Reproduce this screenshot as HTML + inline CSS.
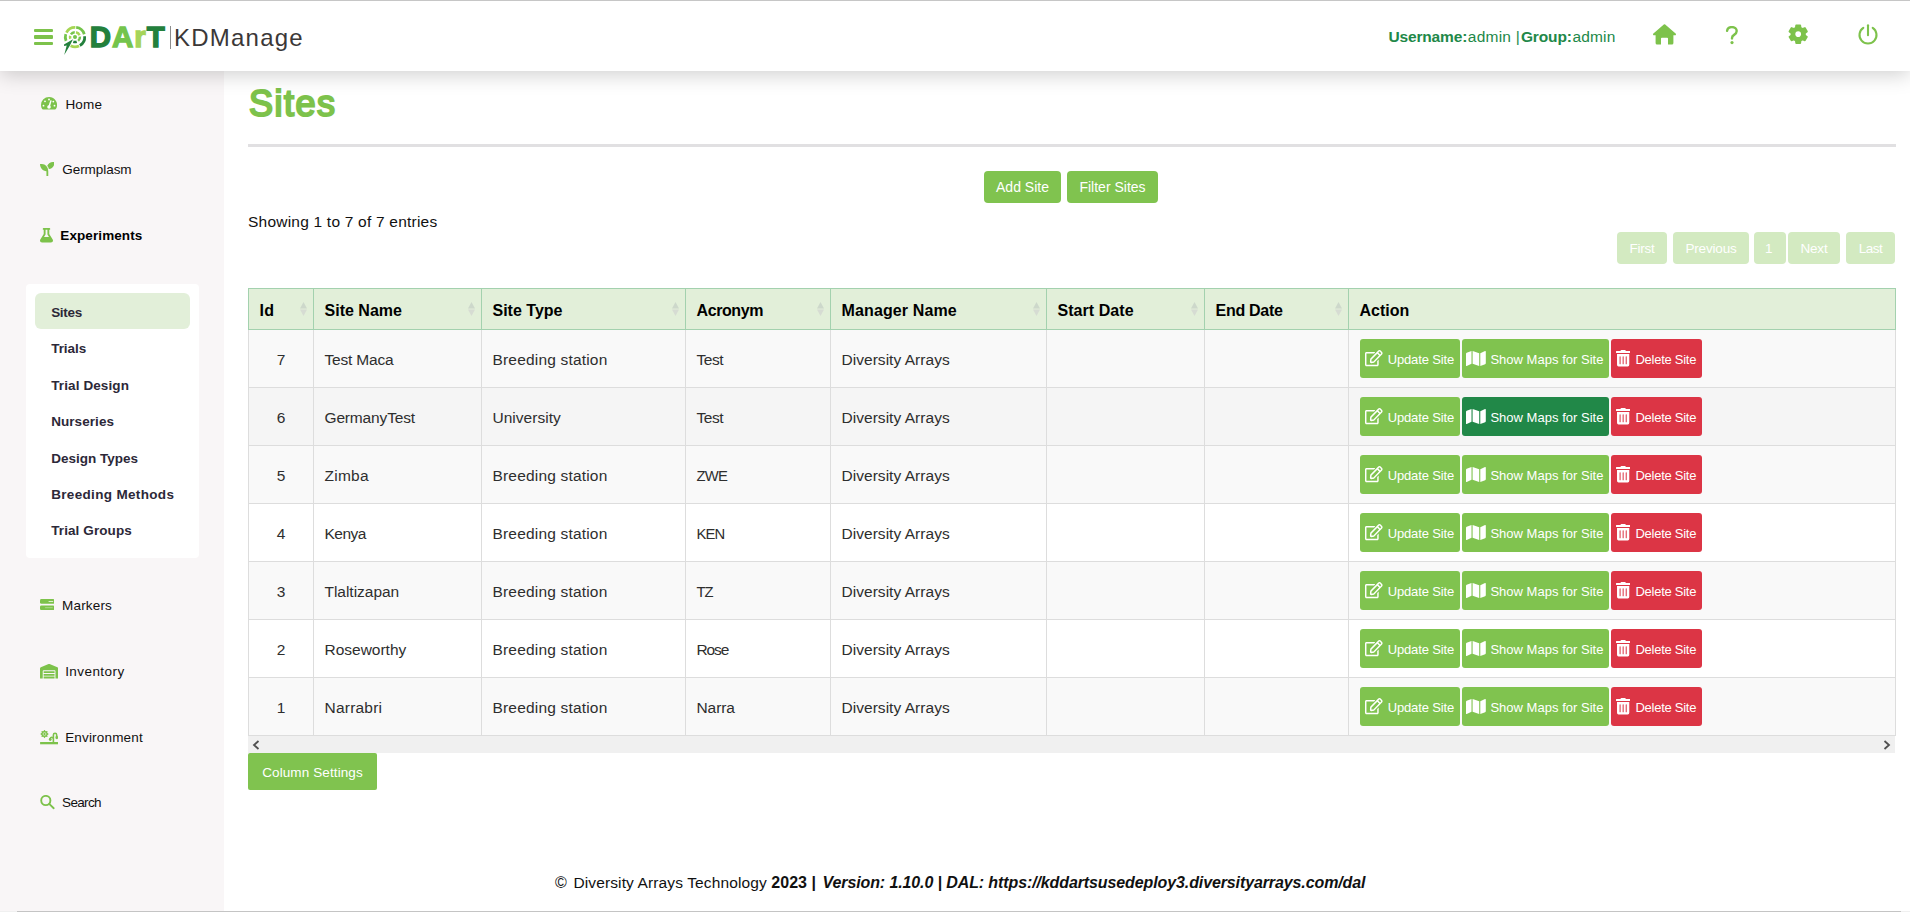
<!DOCTYPE html>
<html lang="en">
<head>
<meta charset="utf-8">
<title>KDManage - Sites</title>
<style>
*{box-sizing:border-box;margin:0;padding:0}
html,body{width:1910px;height:912px;overflow:hidden;background:#fff}
body{font-family:"Liberation Sans",sans-serif;color:#212529;position:relative}
svg{display:block}
#hdr{position:absolute;left:0;top:0;width:1910px;height:71px;border-top:1px solid #c6c6c6;background:#fff;box-shadow:0 3px 20px rgba(0,0,0,.2);z-index:5}
#burger{position:absolute;left:34px;top:28px;width:18.5px;height:16px}
#burger i{position:absolute;left:0;width:18.5px;height:3.2px;background:#7dc24b;border-radius:1px}
#logo{position:absolute;left:60px;top:21px}
#dart{position:absolute;left:89.700px;top:18px;font-size:29.500px;font-weight:bold;line-height:36px;letter-spacing:.95px;-webkit-text-stroke:1.300px currentColor;white-space:nowrap}
#dart .d{color:#23803c}#dart .a{color:#74c44c}#dart .r{color:#a6d45a}#dart .t{color:#23803c}
#sep{position:absolute;left:170px;top:25px;width:1px;height:23px;background:#8d8d8d}
#kdm{position:absolute;left:174px;top:22px;font-size:24px;line-height:30px;color:#3b3838;white-space:nowrap}
#user{position:absolute;left:1388.500px;top:26px;font-size:15.500px;line-height:20px;color:#218848;white-space:nowrap}
#user b{font-weight:bold}
#user span,#user b{position:absolute;top:0}
.hic{position:absolute}
#side{position:absolute;left:0;top:70px;width:224px;height:842px;background:#f9f6f7}
.mi{position:absolute;left:0;width:224px;height:20px;font-size:13.500px;line-height:21px;color:#111;white-space:nowrap}
.mi svg{position:absolute}
.mi span{position:absolute;top:0}
#sub{position:absolute;left:26px;top:214px;width:173px;height:274px;background:#fff;border-radius:4px}
#sub a{position:absolute;left:9px;width:155px;height:36px;line-height:39px;padding-left:16.200px;font-size:13.500px;font-weight:bold;color:#2c2838;border-radius:6px;text-decoration:none;white-space:nowrap}
#sub a.on{background:#e2efd9}
#main{position:absolute;left:224px;top:70px;width:1686px;height:842px;background:#fff}
h1{position:absolute;left:25px;top:10px;font-size:36px;line-height:48px;font-weight:normal;-webkit-text-stroke:2.100px #7dc24b;color:#7dc24b;white-space:nowrap;letter-spacing:1.500px}
#hr{position:absolute;left:24px;top:74px;width:1648px;height:3px;background:#e1e0e2}
.btn{position:absolute;height:32px;line-height:32px;border-radius:4px;background:#80c34f;color:#fff;font-size:14px;text-align:center;white-space:nowrap}
#info{position:absolute;left:24px;top:141px;font-size:15.500px;line-height:22px;color:#111;white-space:nowrap}
.pg{position:absolute;top:162px;height:32px;line-height:34px;border-radius:4px;background:#d3eac1;color:#fff;font-size:13.500px;text-align:center;white-space:nowrap}
#tbl{position:absolute;left:24px;top:218px;width:1647px;border-collapse:collapse;table-layout:fixed;font-size:15.500px}
#tbl th{height:41px;background:#e2efd9;border:1px solid #a3d1ae;text-align:left;padding:3px 0 0 10.500px;font-size:16px;font-weight:bold;color:#000;position:relative;white-space:nowrap}
#tbl td{height:58px;border:1px solid #ddd;padding:2px 0 0 10.500px;color:#2e2e2e;white-space:nowrap;vertical-align:middle;background:#fff}
#tbl tr:nth-child(odd) td{background:#f9f9f9}
#tbl tr.hov td{background:#f5f5f5}
#tbl td.c{text-align:center;padding:2px 0 0 0}
#tbl td.act{padding-left:11px}
.srt{position:absolute;right:6px;top:13px;width:7px;height:14px}
.aw{position:relative;top:-1px;height:39px;width:345px}
.ab{position:absolute;top:0;height:39px;line-height:42px;border-radius:3px;color:#fff;font-size:13px}
.ab svg{position:absolute}
.ab em{position:absolute;top:0;font-style:normal;white-space:nowrap}
.ab.u{left:0;width:100px;background:#80c34f}
.ab.m{left:102.200px;width:146.700px;background:#80c34f}
.ab.m.dk{background:#218848}
.ab.d{left:251px;width:91px;background:#dc3545}
.ic-e{left:5px;top:11.400px}.ab.u em{left:27.700px}
.ic-m{left:3.800px;top:11.700px}.ab.m em{left:28.200px}
.ic-t{left:5px;top:11.400px}.ab.d em{left:24.500px}
#scr{position:absolute;left:24px;top:666px;width:1647px;height:17px;background:#f0f0f0}
#scr svg{position:absolute;top:4px}
#cols{position:absolute;left:24px;top:683px;width:129px;height:37px;line-height:40px;background:#80c34f;color:#fff;font-size:13.500px;text-align:center;border-radius:2px;white-space:nowrap}
#foot{position:absolute;left:0;top:801.500px;width:1686px;height:22px;font-size:16px;line-height:22px;color:#111;white-space:nowrap}
#foot span,#foot b{position:absolute;top:0}
#botline{position:absolute;left:0;top:911px;width:1910px;height:1px;background:#f0f0f0;z-index:6}
#botline i{position:absolute;left:17px;top:0;width:1884px;height:1px;background:#c4c4c4}
</style>
</head>
<body>
<div id="hdr">
  <div id="burger"><i style="top:0"></i><i style="top:6.400px"></i><i style="top:12.900px"></i></div>
  <svg id="logo" width="30" height="36" viewBox="0 0 30 36"><g fill="none"><path d="M6.44 10.55A9.70 9.70 0 0 1 15.34 5.41" stroke="#a6d653" stroke-width="2.75"/><path d="M16.18 5.47A9.70 9.70 0 0 1 24.28 12.26" stroke="#74c44c" stroke-width="2.75"/><path d="M24.66 14.25A9.70 9.70 0 0 1 19.85 23.50" stroke="#23803c" stroke-width="2.75"/><path d="M19.10 23.89A9.70 9.70 0 0 1 10.60 23.74" stroke="#a6d653" stroke-width="2.75"/><path d="M6.07 18.89A9.70 9.70 0 0 1 5.77 12.10" stroke="#74c44c" stroke-width="2.75"/><path d="M10.90 12.33A4.95 4.95 0 0 1 14.74 10.16" stroke="#74c44c" stroke-width="2.50"/><path d="M16.03 10.26A4.95 4.95 0 0 1 19.56 13.17" stroke="#a6d653" stroke-width="2.50"/><path d="M19.92 14.58A4.95 4.95 0 0 1 18.18 18.89" stroke="#74c44c" stroke-width="2.50"/><path d="M16.69 19.75A4.95 4.95 0 0 1 13.31 19.75" stroke="#23803c" stroke-width="2.50"/><path d="M10.35 16.79A4.95 4.95 0 0 1 10.22 13.82" stroke="#a6d653" stroke-width="2.50"/></g><circle cx="15.0" cy="15.1" r="2" fill="#74c44c"/><path d="M13 17.200L4 22.500L4.100 23.900L6.700 23.500L4.200 32.900L9.600 24z" fill="#23803c"/></svg>
  <div id="dart"><span class="d">D</span><span class="a">A</span><span class="r">r</span><span class="t">T</span></div>
  <div id="sep"></div>
  <div id="kdm" style="letter-spacing:1.22px">KDManage</div>
  <svg class="hic" style="left:1652.800px;top:23.300px" width="23" height="20.500" viewBox="0 0 23 20.500"><path fill="#7dc24b" d="M11.500 0.200a1 1 0 0 1 .7.250L22.600 9.600a.95.95 0 0 1-.6 1.700H20.400V19a1.500 1.500 0 0 1-1.500 1.500H15V14.500a.8.800 0 0 0-.8-.8H8.800a.8.800 0 0 0-.8.800V20.500H4.100A1.500 1.500 0 0 1 2.600 19V11.300H1a.95.95 0 0 1-.6-1.700L10.800.450a1 1 0 0 1 .7-.250z"/></svg><svg class="hic" style="left:1724.800px;top:25.200px" width="14" height="18.500" viewBox="0 0 14 18.500"><path fill="none" stroke="#7dc24b" stroke-width="2.400" stroke-linecap="round" stroke-linejoin="round" d="M2.100 4.800C2.400 2.600 4.300 1.100 6.900 1.100c2.800 0 4.800 1.600 4.800 4 0 1.900-1.100 2.900-2.600 3.800C7.600 9.800 7 10.500 7 12v.4"/><circle cx="7" cy="16.600" r="1.600" fill="#7dc24b"/></svg><svg class="hic" style="left:1787.900px;top:23.300px" width="20.400" height="20.400" viewBox="0 0 20.400 20.400"><path fill="#7dc24b" stroke="#7dc24b" stroke-width="1.600" stroke-linejoin="round" fill-rule="evenodd" d="M7.73 3.76L8.13 1.24L12.27 1.24L12.67 3.76L14.54 4.84L16.93 3.93L19.00 7.51L17.02 9.12L17.02 11.28L19.00 12.89L16.93 16.47L14.54 15.56L12.67 16.64L12.27 19.16L8.13 19.16L7.73 16.64L5.86 15.56L3.47 16.47L1.40 12.89L3.38 11.28L3.38 9.12L1.40 7.51L3.47 3.93L5.86 4.84zM6.50 10.20a3.70 3.70 0 1 0 7.40 0a3.70 3.70 0 1 0 -7.40 0z"/></svg><svg class="hic" style="left:1857px;top:23.400px" width="22" height="22" viewBox="0 0 22 22"><g fill="none" stroke="#7dc24b" stroke-width="2.100" stroke-linecap="round"><path d="M11 1.200V11.200"/><path d="M6.300 3.900A8.500 8.500 0 1 0 15.700 3.900"/></g></svg>
  <div id="user"><b style="left:0.0px;letter-spacing:-0.166px">Username:</b><span style="left:79.3px;letter-spacing:0.24px">admin |</span><b style="left:132.4px;letter-spacing:-0.131px">Group:</b><span style="left:184.0px;letter-spacing:0.145px">admin</span></div>
</div>
<div id="side">
  <div class="mi" style="top:24px"><svg style="left:40.500px;top:2.800px" width="16" height="13" viewBox="0 0 16 13"><path fill="#7dc24b" d="M8 0A8 8 0 0 0 0 8c0 1.500.4 2.900 1.100 4.100.2.300.5.500.9.500h12c.4 0 .7-.2.9-.5A8 8 0 0 0 8 0z"/><g fill="#fff"><circle cx="8" cy="2.500" r=".9"/><circle cx="4" cy="4.300" r=".9"/><circle cx="2.500" cy="8.700" r=".9"/><circle cx="13.500" cy="8.700" r=".9"/><circle cx="12.300" cy="4.600" r=".9"/><circle cx="8" cy="10" r="1.800"/><path d="M7.200 9.800L9.400 3.200l1.300.4L8.700 10.200z"/></g></svg><span style="left:65.4px;letter-spacing:0.19px">Home</span></div>
  <div class="mi" style="top:89px"><svg style="left:39.500px;top:2.700px" width="14.700" height="14.300" viewBox="0 32 512 448" preserveAspectRatio="none"><path fill="#7dc24b" d="M64 96H0c0 123.700 100.300 224 224 224v144c0 8.800 7.200 16 16 16h32c8.800 0 16-7.200 16-16V320C288 196.300 187.700 96 64 96zm384-64c-84.200 0-157.400 46.500-195.700 115.200 27.700 30.200 48.200 66.900 59 107.600C424 243.100 512 147.900 512 32h-64z"/></svg><span style="left:62.3px;letter-spacing:-0.062px">Germplasm</span></div>
  <div class="mi" style="top:155px"><svg style="left:39.700px;top:3px" width="13" height="14.500" viewBox="0 0 448 512" preserveAspectRatio="none"><path fill="#7dc24b" d="M437.200 403.500L320 215V64h8c13.300 0 24-10.700 24-24V24c0-13.300-10.700-24-24-24H120c-13.300 0-24 10.700-24 24v16c0 13.300 10.700 24 24 24h8v151L10.800 403.500C-18.500 450.600 15.300 512 70.900 512h306.200c55.700 0 89.400-61.500 60.100-108.500zM137.900 320l48.200-77.600c3.700-5.200 5.800-11.600 5.800-18.400V64h64v160c0 6.900 2.200 13.200 5.900 18.400l48.200 77.600h-172.100z"/></svg><span style="left:60.3px;font-weight:bold;color:#000;letter-spacing:0.094px">Experiments</span></div>
  <div class="mi" style="top:525px"><svg style="left:39.700px;top:4px" width="14.400" height="11.100" viewBox="0 0 28.800 22.200"><rect x="0" y="0" width="28.800" height="9.600" rx="2.800" fill="#7dc24b"/><rect x="0" y="12.800" width="28.800" height="9.400" rx="2.800" fill="#7dc24b"/><path d="M18 5h7.600" stroke="#fff" stroke-width="1.500" stroke-linecap="round"/><path d="M11 17.400h13.600" stroke="#c3e4ac" stroke-width="1.300" stroke-linecap="round"/></svg><span style="left:62.1px;letter-spacing:0.17px">Markers</span></div>
  <div class="mi" style="top:591px"><svg style="left:39.700px;top:3.400px" width="18.200" height="14.400" viewBox="0 0 640 512" preserveAspectRatio="none"><path fill="#7dc24b" d="M504 352H136.400c-4.400 0-8 3.600-8 8l-.1 48c0 4.400 3.600 8 8 8H504c4.400 0 8-3.600 8-8v-48c0-4.400-3.600-8-8-8zm0 96H136.100c-4.400 0-8 3.600-8 8l-.1 48c0 4.400 3.600 8 8 8h368c4.400 0 8-3.600 8-8v-48c0-4.400-3.600-8-8-8zm0-192H136.600c-4.400 0-8 3.600-8 8l-.1 48c0 4.400 3.600 8 8 8H504c4.400 0 8-3.600 8-8v-48c0-4.400-3.600-8-8-8zm106.500-139L338.400 3.700a48.150 48.150 0 0 0-36.900 0L29.500 117C11.700 124.500 0 141.900 0 161.300V504c0 4.400 3.600 8 8 8h80c4.400 0 8-3.600 8-8V256c0-17.600 14.600-32 32.600-32h382.800c18 0 32.600 14.400 32.600 32v248c0 4.400 3.600 8 8 8h80c4.400 0 8-3.600 8-8V161.300c0-19.400-11.700-36.800-29.500-44.300z"/></svg><span style="left:65.2px;letter-spacing:0.43px">Inventory</span></div>
  <div class="mi" style="top:657px"><svg style="left:39.700px;top:3px" width="18.200" height="14.500" viewBox="0 0 36.400 29"><path d="M9.00 -0.60L11.26 2.55L15.08 1.92L14.45 5.74L17.60 8.00L14.45 10.26L15.08 14.08L11.26 13.45L9.00 16.60L6.74 13.45L2.92 14.08L3.55 10.26L0.40 8.00L3.55 5.74L2.92 1.92L6.74 2.55z" fill="#7dc24b"/><circle cx="9" cy="8" r="2.900" fill="none" stroke="#e9f4df" stroke-width="1.300"/><g fill="none" stroke="#7dc24b"><path d="M0.200 26.300h36" stroke-width="4.600"/><path d="M26.800 25V9.800a3.300 3.300 0 0 1 6.600 0v3.500" stroke-width="3.200"/><path d="M26.800 17a3.300 3.300 0 0 0-6.400 0v1.500" stroke-width="3"/></g><ellipse cx="33.500" cy="14.800" rx="2.700" ry="3.500" fill="#7dc24b"/><ellipse cx="20.500" cy="18.600" rx="2.700" ry="3.300" fill="#7dc24b"/></svg><span style="left:65.2px;letter-spacing:0.167px">Environment</span></div>
  <div class="mi" style="top:722px"><svg style="left:39.700px;top:3px" width="16" height="16" viewBox="0 0 16 16"><g fill="none" stroke="#7dc24b" stroke-width="1.900" stroke-linecap="round"><circle cx="5.800" cy="5.500" r="4.600"/><path d="M9.200 8.900L13.700 13.200"/></g></svg><span style="left:62.1px;letter-spacing:-0.679px">Search</span></div>
  <div id="sub">
    <a class="on" style="top:9px;letter-spacing:-0.32px">Sites</a>
    <a style="top:45px;letter-spacing:-0.036px">Trials</a>
    <a style="top:82px;letter-spacing:0.114px">Trial Design</a>
    <a style="top:118px;letter-spacing:0.061px">Nurseries</a>
    <a style="top:155px;letter-spacing:0.007px">Design Types</a>
    <a style="top:191px;letter-spacing:0.332px">Breeding Methods</a>
    <a style="top:227px;letter-spacing:0.097px">Trial Groups</a>
  </div>
</div>
<div id="main">
  <h1>Sites</h1>
  <div id="hr"></div>
  <div class="btn" style="left:760px;top:101px;width:77px">Add Site</div>
  <div class="btn" style="left:843px;top:101px;width:91px">Filter Sites</div>
  <div id="info" style="letter-spacing:0.218px">Showing 1 to 7 of 7 entries</div>
  <div class="pg" style="left:1393px;width:50px;letter-spacing:-0.263px">First</div>
  <div class="pg" style="left:1449px;width:76px;letter-spacing:-0.178px">Previous</div>
  <div class="pg" style="left:1530px;width:32px;padding-right:2.500px">1</div>
  <div class="pg" style="left:1564px;width:52px;letter-spacing:-0.189px">Next</div>
  <div class="pg" style="left:1622px;width:49px;letter-spacing:-0.477px">Last</div>
<table id="tbl"><colgroup><col style="width:65px"><col style="width:168px"><col style="width:204px"><col style="width:145px"><col style="width:216px"><col style="width:158px"><col style="width:144px"><col style="width:547px"></colgroup>
<thead><tr><th><span style="letter-spacing:0.266px">Id</span><svg class="srt" viewBox="0 0 7 14"><path d="M3.500 0L7 6.400H0z" fill="#cdd8cb"/><path d="M3.500 14L7 7.600H0z" fill="#d6dcd3"/></svg></th><th><span style="letter-spacing:0.01px">Site Name</span><svg class="srt" viewBox="0 0 7 14"><path d="M3.500 0L7 6.400H0z" fill="#cdd8cb"/><path d="M3.500 14L7 7.600H0z" fill="#d6dcd3"/></svg></th><th><span style="letter-spacing:0.0px">Site Type</span><svg class="srt" viewBox="0 0 7 14"><path d="M3.500 0L7 6.400H0z" fill="#cdd8cb"/><path d="M3.500 14L7 7.600H0z" fill="#d6dcd3"/></svg></th><th><span style="letter-spacing:-0.401px">Acronym</span><svg class="srt" viewBox="0 0 7 14"><path d="M3.500 0L7 6.400H0z" fill="#cdd8cb"/><path d="M3.500 14L7 7.600H0z" fill="#d6dcd3"/></svg></th><th><span style="letter-spacing:0.127px">Manager Name</span><svg class="srt" viewBox="0 0 7 14"><path d="M3.500 0L7 6.400H0z" fill="#cdd8cb"/><path d="M3.500 14L7 7.600H0z" fill="#d6dcd3"/></svg></th><th><span style="letter-spacing:0.053px">Start Date</span><svg class="srt" viewBox="0 0 7 14"><path d="M3.500 0L7 6.400H0z" fill="#cdd8cb"/><path d="M3.500 14L7 7.600H0z" fill="#d6dcd3"/></svg></th><th><span style="letter-spacing:-0.284px">End Date</span><svg class="srt" viewBox="0 0 7 14"><path d="M3.500 0L7 6.400H0z" fill="#cdd8cb"/><path d="M3.500 14L7 7.600H0z" fill="#d6dcd3"/></svg></th><th><span style="letter-spacing:-0.003px">Action</span></th></tr></thead><tbody>
<tr><td class="c">7</td><td><span style="letter-spacing:-0.182px">Test Maca</span></td><td><span style="letter-spacing:0.182px">Breeding station</span></td><td><span style="letter-spacing:-0.479px">Test</span></td><td><span style="letter-spacing:0.037px">Diversity Arrays</span></td><td></td><td></td><td class="act"><div class="aw"><span class="ab u"><svg class="ic-e" viewBox="0 0 576 512" width="17.600" height="16.200" preserveAspectRatio="none"><path fill="#fff" d="M402.300 344.900l32-32c5-5 13.700-1.500 13.700 5.700V464c0 26.500-21.500 48-48 48H48c-26.500 0-48-21.500-48-48V112c0-26.500 21.500-48 48-48h273.500c7.100 0 10.700 8.600 5.700 13.700l-32 32c-1.500 1.500-3.500 2.300-5.700 2.300H48v352h352V350.500c0-2.100.8-4.100 2.300-5.600zm156.600-201.800L296.300 405.700l-90.400 10c-26.200 2.900-48.500-19.200-45.600-45.600l10-90.400L432.900 17.100c22.900-22.900 59.900-22.900 82.700 0l43.200 43.200c22.900 22.900 22.900 60 .1 82.800zM460.100 174L402 115.900 216.200 301.800l-7.300 65.300 65.300-7.300L460.100 174zm64.800-79.700l-43.200-43.200c-4.100-4.100-10.800-4.100-14.800 0L436 82l58.100 58.100 30.900-30.900c4-4.200 4-10.800-.1-14.900z"/></svg><em style="letter-spacing:-0.145px">Update Site</em></span><span class="ab m"><svg class="ic-m" viewBox="0 32 576 448" width="19.800" height="15" preserveAspectRatio="none"><path fill="#fff" d="M0 117.660v346.320c0 11.320 11.430 19.060 21.940 14.860L160 416V32L20.120 87.950A32.006 32.006 0 0 0 0 117.660zM192 416l192 64V96L192 32v384zM554.060 33.160L416 96v384l139.880-55.950A31.996 31.996 0 0 0 576 394.340V48.020c0-11.320-11.430-19.060-21.940-14.860z"/></svg><em style="letter-spacing:0.022px">Show Maps for Site</em></span><span class="ab d"><svg class="ic-t" viewBox="0 0 448 512" width="14.300" height="16.400" preserveAspectRatio="none"><path fill="#fff" d="M32 464a48 48 0 0 0 48 48h288a48 48 0 0 0 48-48V128H32zm272-256a16 16 0 0 1 32 0v224a16 16 0 0 1-32 0zm-96 0a16 16 0 0 1 32 0v224a16 16 0 0 1-32 0zm-96 0a16 16 0 0 1 32 0v224a16 16 0 0 1-32 0zM432 32H312l-9.400-18.700A24 24 0 0 0 281.100 0H166.800a23.720 23.720 0 0 0-21.400 13.300L136 32H16A16 16 0 0 0 0 48v32a16 16 0 0 0 16 16h416a16 16 0 0 0 16-16V48a16 16 0 0 0-16-16z"/></svg><em style="letter-spacing:-0.271px">Delete Site</em></span></div></td></tr>
<tr class="hov"><td class="c">6</td><td><span style="letter-spacing:-0.159px">GermanyTest</span></td><td><span style="letter-spacing:0.019px">University</span></td><td><span style="letter-spacing:-0.479px">Test</span></td><td><span style="letter-spacing:0.037px">Diversity Arrays</span></td><td></td><td></td><td class="act"><div class="aw"><span class="ab u"><svg class="ic-e" viewBox="0 0 576 512" width="17.600" height="16.200" preserveAspectRatio="none"><path fill="#fff" d="M402.300 344.900l32-32c5-5 13.700-1.500 13.700 5.700V464c0 26.500-21.500 48-48 48H48c-26.500 0-48-21.500-48-48V112c0-26.500 21.500-48 48-48h273.500c7.100 0 10.700 8.600 5.700 13.700l-32 32c-1.500 1.500-3.500 2.300-5.700 2.300H48v352h352V350.500c0-2.100.8-4.100 2.300-5.600zm156.600-201.800L296.300 405.700l-90.400 10c-26.200 2.900-48.500-19.200-45.600-45.600l10-90.400L432.900 17.100c22.900-22.900 59.900-22.900 82.700 0l43.200 43.200c22.900 22.900 22.900 60 .1 82.800zM460.100 174L402 115.900 216.200 301.800l-7.300 65.300 65.300-7.300L460.100 174zm64.800-79.700l-43.200-43.200c-4.100-4.100-10.800-4.100-14.800 0L436 82l58.100 58.100 30.900-30.900c4-4.200 4-10.800-.1-14.900z"/></svg><em style="letter-spacing:-0.145px">Update Site</em></span><span class="ab m dk"><svg class="ic-m" viewBox="0 32 576 448" width="19.800" height="15" preserveAspectRatio="none"><path fill="#fff" d="M0 117.660v346.320c0 11.320 11.430 19.060 21.940 14.860L160 416V32L20.120 87.950A32.006 32.006 0 0 0 0 117.660zM192 416l192 64V96L192 32v384zM554.060 33.160L416 96v384l139.880-55.950A31.996 31.996 0 0 0 576 394.340V48.020c0-11.320-11.430-19.060-21.940-14.860z"/></svg><em style="letter-spacing:0.022px">Show Maps for Site</em></span><span class="ab d"><svg class="ic-t" viewBox="0 0 448 512" width="14.300" height="16.400" preserveAspectRatio="none"><path fill="#fff" d="M32 464a48 48 0 0 0 48 48h288a48 48 0 0 0 48-48V128H32zm272-256a16 16 0 0 1 32 0v224a16 16 0 0 1-32 0zm-96 0a16 16 0 0 1 32 0v224a16 16 0 0 1-32 0zm-96 0a16 16 0 0 1 32 0v224a16 16 0 0 1-32 0zM432 32H312l-9.400-18.700A24 24 0 0 0 281.100 0H166.800a23.720 23.720 0 0 0-21.400 13.300L136 32H16A16 16 0 0 0 0 48v32a16 16 0 0 0 16 16h416a16 16 0 0 0 16-16V48a16 16 0 0 0-16-16z"/></svg><em style="letter-spacing:-0.271px">Delete Site</em></span></div></td></tr>
<tr><td class="c">5</td><td><span style="letter-spacing:0.234px">Zimba</span></td><td><span style="letter-spacing:0.182px">Breeding station</span></td><td><span style="letter-spacing:-0.787px;font-size:14.800px">ZWE</span></td><td><span style="letter-spacing:0.037px">Diversity Arrays</span></td><td></td><td></td><td class="act"><div class="aw"><span class="ab u"><svg class="ic-e" viewBox="0 0 576 512" width="17.600" height="16.200" preserveAspectRatio="none"><path fill="#fff" d="M402.300 344.900l32-32c5-5 13.700-1.500 13.700 5.700V464c0 26.500-21.500 48-48 48H48c-26.500 0-48-21.500-48-48V112c0-26.500 21.500-48 48-48h273.500c7.100 0 10.700 8.600 5.700 13.700l-32 32c-1.500 1.500-3.500 2.300-5.700 2.300H48v352h352V350.500c0-2.100.8-4.100 2.300-5.600zm156.600-201.800L296.300 405.700l-90.400 10c-26.200 2.900-48.500-19.200-45.600-45.600l10-90.400L432.900 17.100c22.900-22.900 59.900-22.900 82.700 0l43.200 43.200c22.900 22.900 22.900 60 .1 82.800zM460.100 174L402 115.900 216.200 301.800l-7.300 65.300 65.300-7.300L460.100 174zm64.800-79.700l-43.200-43.200c-4.100-4.100-10.800-4.100-14.800 0L436 82l58.100 58.100 30.900-30.900c4-4.200 4-10.800-.1-14.900z"/></svg><em style="letter-spacing:-0.145px">Update Site</em></span><span class="ab m"><svg class="ic-m" viewBox="0 32 576 448" width="19.800" height="15" preserveAspectRatio="none"><path fill="#fff" d="M0 117.660v346.320c0 11.320 11.430 19.060 21.940 14.860L160 416V32L20.120 87.950A32.006 32.006 0 0 0 0 117.660zM192 416l192 64V96L192 32v384zM554.060 33.160L416 96v384l139.880-55.950A31.996 31.996 0 0 0 576 394.340V48.020c0-11.320-11.430-19.060-21.940-14.860z"/></svg><em style="letter-spacing:0.022px">Show Maps for Site</em></span><span class="ab d"><svg class="ic-t" viewBox="0 0 448 512" width="14.300" height="16.400" preserveAspectRatio="none"><path fill="#fff" d="M32 464a48 48 0 0 0 48 48h288a48 48 0 0 0 48-48V128H32zm272-256a16 16 0 0 1 32 0v224a16 16 0 0 1-32 0zm-96 0a16 16 0 0 1 32 0v224a16 16 0 0 1-32 0zm-96 0a16 16 0 0 1 32 0v224a16 16 0 0 1-32 0zM432 32H312l-9.400-18.700A24 24 0 0 0 281.100 0H166.800a23.720 23.720 0 0 0-21.400 13.300L136 32H16A16 16 0 0 0 0 48v32a16 16 0 0 0 16 16h416a16 16 0 0 0 16-16V48a16 16 0 0 0-16-16z"/></svg><em style="letter-spacing:-0.271px">Delete Site</em></span></div></td></tr>
<tr><td class="c">4</td><td><span style="letter-spacing:-0.492px">Kenya</span></td><td><span style="letter-spacing:0.182px">Breeding station</span></td><td><span style="letter-spacing:-0.919px;font-size:14.800px">KEN</span></td><td><span style="letter-spacing:0.037px">Diversity Arrays</span></td><td></td><td></td><td class="act"><div class="aw"><span class="ab u"><svg class="ic-e" viewBox="0 0 576 512" width="17.600" height="16.200" preserveAspectRatio="none"><path fill="#fff" d="M402.300 344.900l32-32c5-5 13.700-1.500 13.700 5.700V464c0 26.500-21.500 48-48 48H48c-26.500 0-48-21.500-48-48V112c0-26.500 21.500-48 48-48h273.500c7.100 0 10.700 8.600 5.700 13.700l-32 32c-1.500 1.500-3.500 2.300-5.700 2.300H48v352h352V350.500c0-2.100.8-4.100 2.300-5.600zm156.600-201.800L296.300 405.700l-90.400 10c-26.200 2.900-48.500-19.200-45.600-45.600l10-90.400L432.900 17.100c22.900-22.900 59.900-22.900 82.700 0l43.200 43.200c22.900 22.900 22.900 60 .1 82.800zM460.100 174L402 115.900 216.200 301.800l-7.300 65.300 65.300-7.300L460.100 174zm64.800-79.700l-43.200-43.200c-4.100-4.100-10.800-4.100-14.800 0L436 82l58.100 58.100 30.900-30.900c4-4.200 4-10.800-.1-14.900z"/></svg><em style="letter-spacing:-0.145px">Update Site</em></span><span class="ab m"><svg class="ic-m" viewBox="0 32 576 448" width="19.800" height="15" preserveAspectRatio="none"><path fill="#fff" d="M0 117.660v346.320c0 11.320 11.430 19.060 21.940 14.860L160 416V32L20.120 87.950A32.006 32.006 0 0 0 0 117.660zM192 416l192 64V96L192 32v384zM554.060 33.160L416 96v384l139.880-55.950A31.996 31.996 0 0 0 576 394.340V48.020c0-11.320-11.430-19.060-21.940-14.860z"/></svg><em style="letter-spacing:0.022px">Show Maps for Site</em></span><span class="ab d"><svg class="ic-t" viewBox="0 0 448 512" width="14.300" height="16.400" preserveAspectRatio="none"><path fill="#fff" d="M32 464a48 48 0 0 0 48 48h288a48 48 0 0 0 48-48V128H32zm272-256a16 16 0 0 1 32 0v224a16 16 0 0 1-32 0zm-96 0a16 16 0 0 1 32 0v224a16 16 0 0 1-32 0zm-96 0a16 16 0 0 1 32 0v224a16 16 0 0 1-32 0zM432 32H312l-9.400-18.700A24 24 0 0 0 281.100 0H166.800a23.720 23.720 0 0 0-21.400 13.300L136 32H16A16 16 0 0 0 0 48v32a16 16 0 0 0 16 16h416a16 16 0 0 0 16-16V48a16 16 0 0 0-16-16z"/></svg><em style="letter-spacing:-0.271px">Delete Site</em></span></div></td></tr>
<tr><td class="c">3</td><td><span style="letter-spacing:-0.027px">Tlaltizapan</span></td><td><span style="letter-spacing:0.182px">Breeding station</span></td><td><span style="letter-spacing:-1.062px;font-size:14.800px">TZ</span></td><td><span style="letter-spacing:0.037px">Diversity Arrays</span></td><td></td><td></td><td class="act"><div class="aw"><span class="ab u"><svg class="ic-e" viewBox="0 0 576 512" width="17.600" height="16.200" preserveAspectRatio="none"><path fill="#fff" d="M402.300 344.900l32-32c5-5 13.700-1.500 13.700 5.700V464c0 26.500-21.500 48-48 48H48c-26.500 0-48-21.500-48-48V112c0-26.500 21.500-48 48-48h273.500c7.100 0 10.700 8.600 5.700 13.700l-32 32c-1.500 1.500-3.500 2.300-5.700 2.300H48v352h352V350.500c0-2.100.8-4.100 2.300-5.600zm156.600-201.800L296.300 405.700l-90.400 10c-26.200 2.900-48.500-19.200-45.600-45.600l10-90.400L432.900 17.100c22.900-22.900 59.900-22.900 82.700 0l43.200 43.200c22.900 22.900 22.900 60 .1 82.800zM460.100 174L402 115.900 216.200 301.800l-7.300 65.300 65.300-7.300L460.100 174zm64.800-79.700l-43.200-43.200c-4.100-4.100-10.800-4.100-14.800 0L436 82l58.100 58.100 30.900-30.900c4-4.200 4-10.800-.1-14.900z"/></svg><em style="letter-spacing:-0.145px">Update Site</em></span><span class="ab m"><svg class="ic-m" viewBox="0 32 576 448" width="19.800" height="15" preserveAspectRatio="none"><path fill="#fff" d="M0 117.660v346.320c0 11.320 11.430 19.060 21.940 14.860L160 416V32L20.120 87.950A32.006 32.006 0 0 0 0 117.660zM192 416l192 64V96L192 32v384zM554.060 33.160L416 96v384l139.880-55.950A31.996 31.996 0 0 0 576 394.340V48.020c0-11.320-11.430-19.060-21.940-14.860z"/></svg><em style="letter-spacing:0.022px">Show Maps for Site</em></span><span class="ab d"><svg class="ic-t" viewBox="0 0 448 512" width="14.300" height="16.400" preserveAspectRatio="none"><path fill="#fff" d="M32 464a48 48 0 0 0 48 48h288a48 48 0 0 0 48-48V128H32zm272-256a16 16 0 0 1 32 0v224a16 16 0 0 1-32 0zm-96 0a16 16 0 0 1 32 0v224a16 16 0 0 1-32 0zm-96 0a16 16 0 0 1 32 0v224a16 16 0 0 1-32 0zM432 32H312l-9.400-18.700A24 24 0 0 0 281.100 0H166.800a23.720 23.720 0 0 0-21.400 13.300L136 32H16A16 16 0 0 0 0 48v32a16 16 0 0 0 16 16h416a16 16 0 0 0 16-16V48a16 16 0 0 0-16-16z"/></svg><em style="letter-spacing:-0.271px">Delete Site</em></span></div></td></tr>
<tr><td class="c">2</td><td><span style="letter-spacing:-0.005px">Roseworthy</span></td><td><span style="letter-spacing:0.182px">Breeding station</span></td><td><span style="letter-spacing:-1.129px">Rose</span></td><td><span style="letter-spacing:0.037px">Diversity Arrays</span></td><td></td><td></td><td class="act"><div class="aw"><span class="ab u"><svg class="ic-e" viewBox="0 0 576 512" width="17.600" height="16.200" preserveAspectRatio="none"><path fill="#fff" d="M402.300 344.900l32-32c5-5 13.700-1.500 13.700 5.700V464c0 26.500-21.500 48-48 48H48c-26.500 0-48-21.500-48-48V112c0-26.500 21.500-48 48-48h273.500c7.100 0 10.700 8.600 5.700 13.700l-32 32c-1.500 1.500-3.500 2.300-5.700 2.300H48v352h352V350.500c0-2.100.8-4.100 2.300-5.600zm156.600-201.800L296.300 405.700l-90.400 10c-26.200 2.900-48.500-19.200-45.600-45.600l10-90.400L432.900 17.100c22.900-22.900 59.900-22.900 82.700 0l43.200 43.200c22.900 22.900 22.900 60 .1 82.800zM460.100 174L402 115.900 216.200 301.800l-7.300 65.300 65.300-7.300L460.100 174zm64.800-79.700l-43.200-43.200c-4.100-4.100-10.800-4.100-14.800 0L436 82l58.100 58.100 30.900-30.900c4-4.200 4-10.800-.1-14.900z"/></svg><em style="letter-spacing:-0.145px">Update Site</em></span><span class="ab m"><svg class="ic-m" viewBox="0 32 576 448" width="19.800" height="15" preserveAspectRatio="none"><path fill="#fff" d="M0 117.660v346.320c0 11.320 11.430 19.060 21.940 14.860L160 416V32L20.120 87.950A32.006 32.006 0 0 0 0 117.660zM192 416l192 64V96L192 32v384zM554.060 33.160L416 96v384l139.880-55.950A31.996 31.996 0 0 0 576 394.340V48.020c0-11.320-11.430-19.060-21.940-14.860z"/></svg><em style="letter-spacing:0.022px">Show Maps for Site</em></span><span class="ab d"><svg class="ic-t" viewBox="0 0 448 512" width="14.300" height="16.400" preserveAspectRatio="none"><path fill="#fff" d="M32 464a48 48 0 0 0 48 48h288a48 48 0 0 0 48-48V128H32zm272-256a16 16 0 0 1 32 0v224a16 16 0 0 1-32 0zm-96 0a16 16 0 0 1 32 0v224a16 16 0 0 1-32 0zm-96 0a16 16 0 0 1 32 0v224a16 16 0 0 1-32 0zM432 32H312l-9.400-18.700A24 24 0 0 0 281.100 0H166.800a23.720 23.720 0 0 0-21.400 13.300L136 32H16A16 16 0 0 0 0 48v32a16 16 0 0 0 16 16h416a16 16 0 0 0 16-16V48a16 16 0 0 0-16-16z"/></svg><em style="letter-spacing:-0.271px">Delete Site</em></span></div></td></tr>
<tr><td class="c">1</td><td><span style="letter-spacing:0.219px">Narrabri</span></td><td><span style="letter-spacing:0.182px">Breeding station</span></td><td><span style="letter-spacing:-0.088px">Narra</span></td><td><span style="letter-spacing:0.037px">Diversity Arrays</span></td><td></td><td></td><td class="act"><div class="aw"><span class="ab u"><svg class="ic-e" viewBox="0 0 576 512" width="17.600" height="16.200" preserveAspectRatio="none"><path fill="#fff" d="M402.300 344.900l32-32c5-5 13.700-1.500 13.700 5.700V464c0 26.500-21.500 48-48 48H48c-26.500 0-48-21.500-48-48V112c0-26.500 21.500-48 48-48h273.500c7.100 0 10.700 8.600 5.700 13.700l-32 32c-1.500 1.500-3.500 2.300-5.700 2.300H48v352h352V350.500c0-2.100.8-4.100 2.300-5.600zm156.600-201.800L296.300 405.700l-90.400 10c-26.200 2.900-48.500-19.200-45.600-45.600l10-90.400L432.900 17.100c22.900-22.900 59.900-22.900 82.700 0l43.200 43.200c22.900 22.900 22.900 60 .1 82.800zM460.100 174L402 115.900 216.200 301.800l-7.300 65.300 65.300-7.300L460.100 174zm64.800-79.700l-43.200-43.200c-4.100-4.100-10.800-4.100-14.800 0L436 82l58.100 58.100 30.900-30.900c4-4.200 4-10.800-.1-14.900z"/></svg><em style="letter-spacing:-0.145px">Update Site</em></span><span class="ab m"><svg class="ic-m" viewBox="0 32 576 448" width="19.800" height="15" preserveAspectRatio="none"><path fill="#fff" d="M0 117.660v346.320c0 11.320 11.430 19.060 21.940 14.860L160 416V32L20.120 87.950A32.006 32.006 0 0 0 0 117.660zM192 416l192 64V96L192 32v384zM554.060 33.160L416 96v384l139.880-55.950A31.996 31.996 0 0 0 576 394.340V48.020c0-11.320-11.430-19.060-21.940-14.860z"/></svg><em style="letter-spacing:0.022px">Show Maps for Site</em></span><span class="ab d"><svg class="ic-t" viewBox="0 0 448 512" width="14.300" height="16.400" preserveAspectRatio="none"><path fill="#fff" d="M32 464a48 48 0 0 0 48 48h288a48 48 0 0 0 48-48V128H32zm272-256a16 16 0 0 1 32 0v224a16 16 0 0 1-32 0zm-96 0a16 16 0 0 1 32 0v224a16 16 0 0 1-32 0zm-96 0a16 16 0 0 1 32 0v224a16 16 0 0 1-32 0zM432 32H312l-9.400-18.700A24 24 0 0 0 281.100 0H166.800a23.720 23.720 0 0 0-21.400 13.300L136 32H16A16 16 0 0 0 0 48v32a16 16 0 0 0 16 16h416a16 16 0 0 0 16-16V48a16 16 0 0 0-16-16z"/></svg><em style="letter-spacing:-0.271px">Delete Site</em></span></div></td></tr>
</tbody></table>
  <div id="scr"><svg style="left:4px" width="8" height="10" viewBox="0 0 8 10"><path d="M6.500 1L2 5l4.500 4" fill="none" stroke="#505050" stroke-width="1.800"/></svg><svg style="left:1635px" width="8" height="10" viewBox="0 0 8 10"><path d="M1.500 1L6 5L1.500 9" fill="none" stroke="#505050" stroke-width="1.800"/></svg></div>
  <div id="cols" style="letter-spacing:0.108px">Column Settings</div>
  <div id="foot"><span style="left:331px">&copy;</span><span style="left:349.4px;font-size:15.500px;letter-spacing:0.127px">Diversity Arrays Technology</span><b style="left:547.3px;letter-spacing:0.028px">2023 |</b><b style="left:598.5px;letter-spacing:-0.109px;font-style:italic">Version: 1.10.0 | DAL: https://kddartsusedeploy3.diversityarrays.com/dal</b></div>
</div>
<div id="botline"><i></i></div>
</body>
</html>
